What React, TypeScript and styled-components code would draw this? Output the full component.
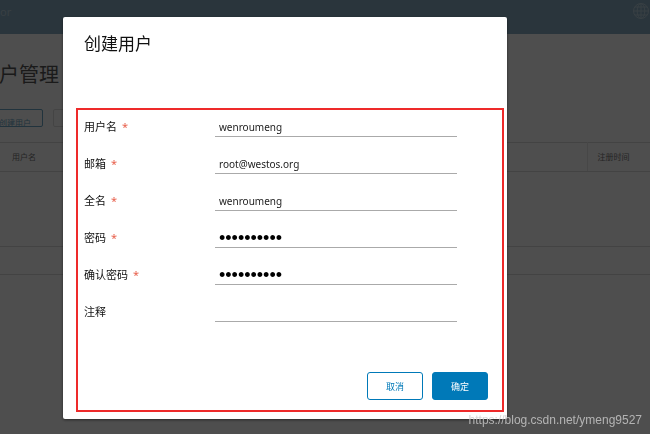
import React from "react";
import styled, { createGlobalStyle } from "styled-components";

const GlobalStyle = createGlobalStyle`
  * { box-sizing: border-box; }
  body {
    margin: 0;
    overflow: hidden;
    background: #fafafa;
    color: #333;
    font-family: "Noto Sans", "Noto Sans CJK SC", sans-serif;
  }
  button, input { font-family: inherit; }
`;

const Page = styled.main`
  min-height: 100vh;
  overflow: hidden;
`;

const TopBar = styled.header`
  display: flex;
  justify-content: space-between;
  height: 34px;
  padding-top: 2px;
  background: #88abc0;
  color: #b4ccd9;
  font-size: 11px;
  line-height: 20px;
`;

const PageTitle = styled.h1`
  margin: 25px 0 0 -1px;
  font-size: 20px;
  font-weight: 400;
  line-height: 32px;
  color: #555;
`;

const Toolbar = styled.div`
  display: flex;
  gap: 10px;
  margin: 18px 0 15px -13px;
`;

const ToolButton = styled.button<{ $muted?: boolean }>`
  width: 56px;
  height: 18px;
  padding: 8px 0 0;
  overflow: hidden;
  border: 1px solid ${(p) => (p.$muted ? "#dcdcdc" : "#6ba5c4")};
  border-radius: 2px;
  background: transparent;
  color: #6ba5c4;
  font-size: 8px;
  line-height: 10px;
`;

const UserTable = styled.table`
  width: 100%;
  border-collapse: collapse;
  border-top: 1px solid #d8d8d8;
  border-bottom: 1px solid #d8d8d8;
  table-layout: fixed;
`;

const HeadCell = styled.th<{ $last?: boolean }>`
  width: ${(p) => (p.$last ? "63px" : "auto")};
  height: 29px;
  padding: 0 0 2px ${(p) => (p.$last ? "10px" : "12px")};
  border-bottom: 1px solid #d8d8d8;
  border-left: ${(p) => (p.$last ? "1px solid #e4e4e4" : "0")};
  color: #777;
  font-size: 8px;
  font-weight: 400;
  text-align: left;
`;

const BodyCell = styled.td<{ $height: number }>`
  height: ${(p) => p.$height}px;
  padding: 0;
  border-bottom: 1px solid #d8d8d8;
`;

const Backdrop = styled.div`
  position: fixed;
  inset: 0;
  padding: 17px 143px 16px 63px;
  background: rgba(0, 0, 0, 0.69);
`;

const Dialog = styled.section`
  padding: 15px 3px 7px 13px;
  border-radius: 2px;
  background: #fff;
  box-shadow: 0 1px 3px rgba(0, 0, 0, 0.5);
`;

const DialogTitle = styled.h2`
  margin: 0 0 52px 8px;
  font-size: 17px;
  font-weight: 400;
  line-height: 24px;
  color: #111;
`;

const Form = styled.form`
  padding: 8px 14px 10px 6px;
  border: 2px solid #ee2a2a;
`;

const Row = styled.div`
  display: grid;
  grid-template-columns: 131px 1fr;
  height: 37px;
  padding-right: 31px;
`;

const Label = styled.label`
  color: #111;
  font-size: 11px;
  line-height: 18px;
`;

const Required = styled.span`
  margin-left: 5px;
  color: #e8604c;
`;

const Field = styled.input`
  width: 100%;
  height: 19px;
  padding: 0 4px;
  border: 0;
  border-bottom: 1px solid #aaa;
  outline: 0;
  background: transparent;
  color: #222;
  font-size: 10px;

  &[type="password"] {
    color: #000;
    font-family: "Liberation Sans", sans-serif;
    font-size: 18px;
  }
`;

const Actions = styled.div`
  display: flex;
  justify-content: flex-end;
  gap: 9px;
  margin-top: 32px;
`;

const Button = styled.button<{ $primary?: boolean }>`
  width: 56px;
  height: 28px;
  padding: 0;
  border: 1px solid #0079b8;
  border-radius: 3px;
  background: ${(p) => (p.$primary ? "#0079b8" : "#fff")};
  color: ${(p) => (p.$primary ? "#fff" : "#0079b8")};
  font-size: 9px;
`;

const Watermark = styled.div`
  position: fixed;
  right: 8px;
  bottom: 6px;
  color: rgba(205, 205, 205, 0.8);
  font: 12px/16px "Liberation Sans", sans-serif;
`;

const GlobeIcon = () => (
  <svg width="18" height="18" viewBox="0 0 18 18" fill="none" stroke="currentColor" aria-hidden="true">
    <circle cx="9" cy="9" r="7.5" />
    <ellipse cx="9" cy="9" rx="3.8" ry="7.5" />
    <path d="M9 1.5v15M1.5 9h15M3 5h12M3 13h12" />
  </svg>
);

const fields = [
  { id: "username", label: "用户名", value: "wenroumeng", required: true },
  { id: "email", label: "邮箱", value: "root@westos.org", required: true },
  { id: "fullname", label: "全名", value: "wenroumeng", required: true },
  { id: "password", label: "密码", value: "Westos1234", required: true, secret: true },
  { id: "confirm", label: "确认密码", value: "Westos1234", required: true, secret: true },
  { id: "comment", label: "注释", value: "" },
];

export default function App() {
  return (
    <>
      <GlobalStyle />
      <Page>
        <TopBar>
          <span>or</span>
          <GlobeIcon />
        </TopBar>
        <PageTitle>户管理</PageTitle>
        <Toolbar>
          <ToolButton>创建用户</ToolButton>
          <ToolButton $muted aria-label="更多" />
        </Toolbar>
        <UserTable>
          <thead>
            <tr>
              <HeadCell>用户名</HeadCell>
              <HeadCell $last>注册时间</HeadCell>
            </tr>
          </thead>
          <tbody>
            <tr>
              <BodyCell colSpan={2} $height={75} />
            </tr>
            <tr>
              <BodyCell colSpan={2} $height={28} />
            </tr>
          </tbody>
        </UserTable>
      </Page>
      <Backdrop>
        <Dialog role="dialog" aria-modal="true" aria-labelledby="dialog-title">
          <DialogTitle id="dialog-title">创建用户</DialogTitle>
          <Form onSubmit={(e) => e.preventDefault()}>
            {fields.map((f) => (
              <Row key={f.id}>
                <Label htmlFor={f.id}>
                  {f.label}
                  {f.required && <Required>*</Required>}
                </Label>
                <Field id={f.id} type={f.secret ? "password" : "text"} defaultValue={f.value} />
              </Row>
            ))}
            <Actions>
              <Button type="button">取消</Button>
              <Button type="submit" $primary>
                确定
              </Button>
            </Actions>
          </Form>
        </Dialog>
      </Backdrop>
      <Watermark>https://blog.csdn.net/ymeng9527</Watermark>
    </>
  );
}
